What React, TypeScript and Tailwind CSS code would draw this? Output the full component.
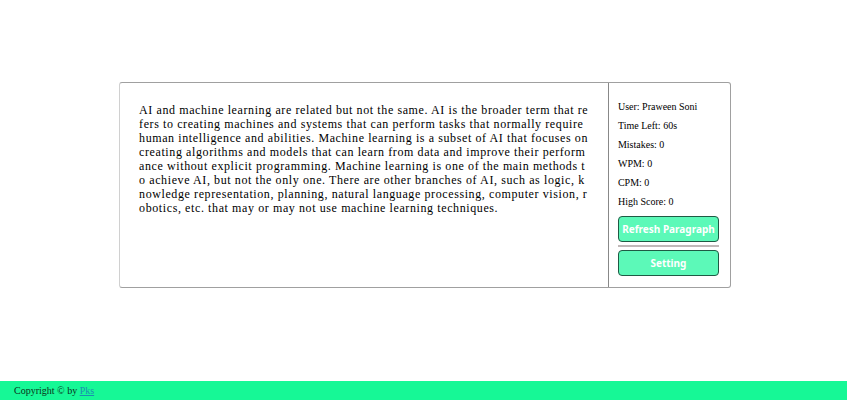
const PARAGRAPH =
  "AI and machine learning are related but not the same. AI is the broader term that refers to creating machines and systems that can perform tasks that normally require human intelligence and abilities. Machine learning is a subset of AI that focuses on creating algorithms and models that can learn from data and improve their performance without explicit programming. Machine learning is one of the main methods to achieve AI, but not the only one. There are other branches of AI, such as logic, knowledge representation, planning, natural language processing, computer vision, robotics, etc. that may or may not use machine learning techniques.";

const STATS = [
  ["User", "Praween Soni"],
  ["Time Left", "60s"],
  ["Mistakes", "0"],
  ["WPM", "0"],
  ["CPM", "0"],
  ["High Score", "0"],
];

function ActionButton({ children }: { children: string }) {
  return (
    <button
      type="button"
      className="block h-[26px] w-full whitespace-nowrap rounded border border-[#1f5a44] bg-[#5cf9b8] font-['Noto_Sans',sans-serif] text-[10px] font-bold text-white"
    >
      {children}
    </button>
  );
}

export default function App() {
  return (
    <div className="flex min-h-screen flex-col bg-white font-['Liberation_Serif',serif] text-black">
      <main className="flex grow items-center justify-center pt-[82px] pb-[93px] pl-[3px]">
        <section className="flex w-[72.5%] self-stretch rounded-[3px] border border-[#a0a0a0] border-l-[#d0d0d0]">
          <p className="grow basis-0 break-all pt-5 pr-[18px] pl-[19px] text-[12px] leading-[14px] tracking-wider">
            {PARAGRAPH}
          </p>
          <aside className="w-[122px] shrink-0 border-l border-[#888888] pt-[14px] pr-[11px] pb-[11px] pl-[9px]">
            <ul className="text-[10px] leading-[19px]">
              {STATS.map(([label, value]) => (
                <li key={label}>
                  {label}: {value}
                </li>
              ))}
            </ul>
            <div className="mt-[5px]">
              <ActionButton>Refresh Paragraph</ActionButton>
              <hr className="my-[3px] border-t-2 border-[#c0b8b8]" />
              <ActionButton>Setting</ActionButton>
            </div>
          </aside>
        </section>
      </main>
      <footer className="bg-[#16f896] px-[14px] text-[10px] leading-[19px] text-[#0b3018]">
        Copyright © by{" "}
        <a href="#" className="text-[#1b8fb0] underline">
          Pks
        </a>
      </footer>
    </div>
  );
}
